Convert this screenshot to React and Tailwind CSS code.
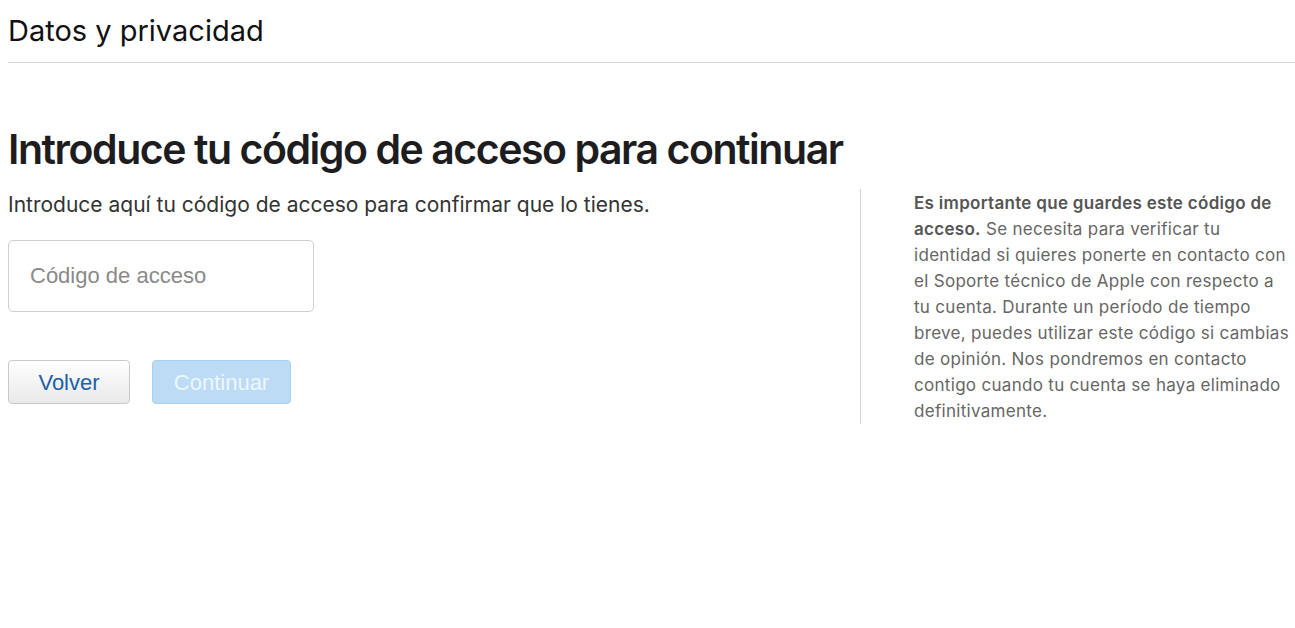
export default function App() {
  return (
    <div className="min-h-screen bg-white text-[#1d1d1f]" style={{ fontFamily: 'Inter, "Noto Sans", sans-serif' }}>
      <header className="ml-2 border-b border-[#d6d6d6] pt-[13px] pb-[14px]">
        <h1 className="text-[29px] leading-[35px] font-normal text-[#111]">Datos y privacidad</h1>
      </header>

      <main className="pl-2">
        <h2 className="mt-[60px] text-[41px] leading-[52px] font-semibold tracking-[-1.45px] text-[#1d1d1f]">
          Introduce tu código de acceso para continuar
        </h2>

        <div className="mt-[14px] flex">
          <section className="w-[852px] pt-[3px]">
            <p className="text-[21px] leading-[25px] text-[#333]">
              Introduce aquí tu código de acceso para confirmar que lo tienes.
            </p>
            <input
              type="text"
              placeholder="Código de acceso"
              className="mt-[23px] block h-[72px] w-[306px] rounded-[5px] border border-[#cfcfcf] px-[21px] text-[22px] text-[#333] placeholder:text-[#8a8a8a] outline-none"
              style={{ fontFamily: '"Liberation Sans", Arial, sans-serif' }}
            />
            <div className="mt-[48px] flex gap-[22px]" style={{ fontFamily: '"Liberation Sans", Arial, sans-serif' }}>
              <button className="h-[44px] w-[122px] rounded-[4px] border border-[#c9c9c9] bg-gradient-to-b from-white to-[#e9e9e9] text-[22px] text-[#1a61a6]">
                Volver
              </button>
              <button disabled className="h-[44px] w-[139px] rounded-[4px] border border-[#a9d0ee] bg-[#bcdcf6] text-[22px] text-[#eef6fd]">
                Continuar
              </button>
            </div>
          </section>

          <aside className="w-[435px] border-l border-[#d2d2d2] pl-[53px] pt-[1px]">
            <p className="w-[381px] text-[17px] leading-[26px] tracking-[0.3px] text-[#666]">
              <strong className="font-semibold text-[#555]">Es importante que guardes este código de acceso.</strong>{' '}
              Se necesita para verificar tu identidad si quieres ponerte en contacto con el Soporte técnico de Apple con respecto a tu cuenta. Durante un período de tiempo breve, puedes utilizar este código si cambias de opinión. Nos pondremos en contacto contigo cuando tu cuenta se haya eliminado definitivamente.
            </p>
          </aside>
        </div>
      </main>
    </div>
  )
}
